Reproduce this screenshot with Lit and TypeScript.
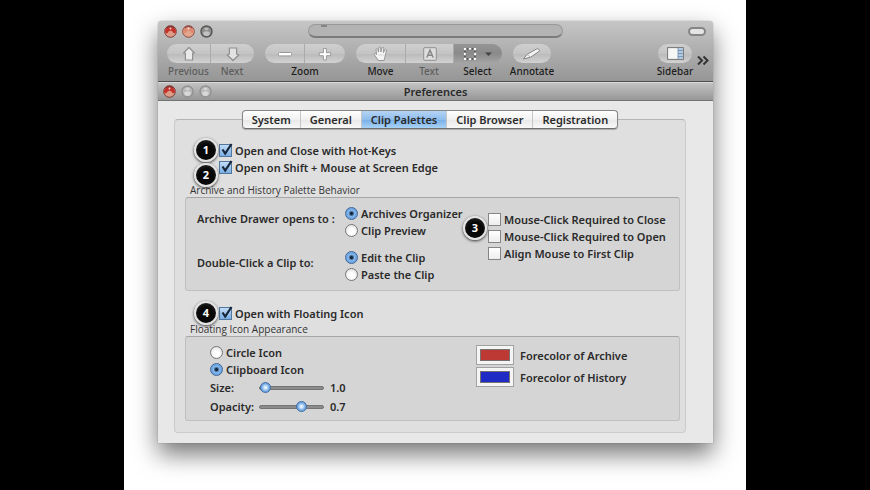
import { LitElement, html, css, svg, nothing, TemplateResult } from "lit";
import { customElement, property, state } from "lit/decorators.js";
import { classMap } from "lit/directives/class-map.js";

const controls = css`
  * { box-sizing: border-box; }
  button, input { margin: 0; padding: 0; border: 0; font: inherit; color: inherit; background: none; }
  svg { display: block; }
`;

@customElement("traffic-lights")
class TrafficLights extends LitElement {
  @property({ type: Boolean }) muted = false;

  static styles = [controls, css`
    :host { display: flex; gap: 5px; }
    button { width: 13px; height: 13px; }
  `];

  private red(name: string, rim: string, top: string, low: string) {
    return html`<button aria-label=${name}>
      <svg width="13" height="13" viewBox="0 0 13 13">
        <circle cx="6.5" cy="6.5" r="5.8" fill=${low} stroke=${rim}/>
        <path d="M1 7a5.500 5.800 0 0 1 11 0C10.800 9 9.600 8.600 8.800 6.800L6.500 5.400 4.200 6.800C3.400 8.600 2.200 9 1 7z" fill=${top}/>
        <path d="M2.600 3a5.400 5.400 0 0 1 7.800 0" fill="none" stroke=${rim} stroke-width="1.400"/>
        <circle cx="6.500" cy="3.600" r="1" fill="#fff" opacity=".75"/>
      </svg></button>`;
  }

  private grey(name: string, rim: string, low: string) {
    return html`<button aria-label=${name}>
      <svg width="13" height="13" viewBox="0 0 13 13">
        <circle cx="6.500" cy="6.500" r="5.500" fill=${low} stroke=${rim} stroke-width="1.400"/>
        ${svg`<ellipse cx="6.500" cy="4" rx="2" ry="1.300" fill="#fff" opacity=".4"/>
        <ellipse cx="6.500" cy="8.600" rx="3.200" ry="2.400" fill="#fff" opacity=".45"/>`}
      </svg></button>`;
  }

  render() {
    return html`
      ${this.red("Close", "#7c3a38", "#c5302b", "#dd9c85")}
      ${this.muted
        ? html`${this.grey("Minimize", "#929292", "#b8b8b8")}${this.grey("Zoom", "#929292", "#b8b8b8")}`
        : html`${this.red("Minimize", "#8f4a42", "#dd8a72", "#e3a58c")}${this.grey("Zoom", "#555", "#8e8e8c")}`}
    `;
  }
}

const icons: Record<string, TemplateResult> = {
  up: html`<svg width="14" height="16" viewBox="0 0 14 16"><path d="M7 1.500 12.500 7H10.600V14H3.400V7H1.500Z" fill="#e9e9e9" stroke="#8f8f8f" stroke-width="1.200" stroke-linejoin="round"/></svg>`,
  down: html`<svg width="14" height="16" viewBox="0 0 14 16"><path d="M7 14.500 12.800 9 10.600 8V2H3.400V8L1.200 9Z" fill="#e2e2e2" stroke="#8f8f8f" stroke-width="1.200" stroke-linejoin="round"/></svg>`,
  minus: html`<svg width="16" height="16" viewBox="0 0 16 16"><rect x="1.500" y="6.500" width="13" height="3.400" rx="1" fill="#fff" stroke="#999"/></svg>`,
  plus: html`<svg width="16" height="16" viewBox="0 0 16 16"><path d="M6.400 2.500h3v4.200h4.200v3H9.400v4.200h-3V9.700H2.200v-3h4.200z" fill="#fff" stroke="#999"/></svg>`,
  hand: html`<svg width="16" height="16" viewBox="0 0 16 16"><path d="M5.200 14.500C4 12 1.600 9.600 1.400 8.300c-.1-1 1.200-1.200 2.200.2L3 3.600c-.1-1.300 1.500-1.400 1.800-.1l.6 2.600L5.800 2c.1-1.200 1.800-1.200 1.900 0l.2 4L9 2.100c.3-1.200 1.900-.8 1.800.4l-.4 4.100 1.500-2.400c.7-1 2-.4 1.600.8l-1.200 4c-.4 1.900-.8 3.500-1.200 5.500z" fill="#f4f4f4" stroke="#8f8f8f" stroke-width=".9"/><path d="M6 8.500v1M8 8v1.500M10 8.500v1" stroke="#aaa" stroke-width=".7"/></svg>`,
  text: html`<svg width="14" height="14" viewBox="0 0 14 14"><rect x=".7" y=".7" width="12.600" height="12.600" rx="1" fill="#dedede" stroke="#8f8f8f"/><path d="M3.800 10.500 7 3.200l3.200 7.300M5 8.300h4" fill="none" stroke="#888" stroke-width="1.500"/></svg>`,
  select: html`<svg width="32" height="16" viewBox="0 0 32 16"><rect x="3" y="3" width="10" height="10" fill="none" stroke="#5c5c5c" stroke-width="2"/><path d="M1.500 1.500h3v3h-3zM6.500 1.500h3v2.600h-3zM11.500 1.500h3v3h-3zM1.500 6.500h2.600v3H1.500zM11.900 6.500h2.600v3h-2.600zM1.500 11.500h3v3h-3zM6.500 11.900h3v2.600h-3zM11.500 11.500h3v3h-3z" fill="#fff" stroke="#666" stroke-width=".5"/><path d="M23 6.500h7l-3.500 3.500z" fill="#444"/></svg>`,
  pen: html`<svg width="20" height="14" viewBox="0 0 20 14"><path d="M1.500 12 5 7.400 14.500 2c1.400-.7 3.600.8 2.800 2.300L8.500 10.200z" fill="#f3f3f3" stroke="#858585" stroke-linejoin="round"/><path d="M5 7.400 8.500 10.200" stroke="#aaa" stroke-width=".8"/></svg>`,
  sidebar: html`<svg width="17" height="13" viewBox="0 0 17 13"><rect x=".6" y=".6" width="15.800" height="11.800" fill="#f6f6f6" stroke="#757575"/><rect x="11" y="1" width="5" height="11" fill="#b4cae2"/><path d="M11 1v11M11 3.500h5M11 6.500h5M11 9.500h5" stroke="#6d8aac" stroke-width=".8"/></svg>`,
};

interface Tool { icon: string; name: string; width: number; dim?: boolean; pressed?: boolean; }
interface ToolGroup { tools: Tool[]; caption?: string; end?: boolean; }

const toolGroups: ToolGroup[] = [
  { tools: [{ icon: "up", name: "Previous", width: 43, dim: true }, { icon: "down", name: "Next", width: 44, dim: true }] },
  { caption: "Zoom", tools: [{ icon: "minus", name: "Zoom out", width: 39 }, { icon: "plus", name: "Zoom in", width: 41 }] },
  { tools: [{ icon: "hand", name: "Move", width: 49 }, { icon: "text", name: "Text", width: 48, dim: true }, { icon: "select", name: "Select", width: 49, pressed: true }] },
  { tools: [{ icon: "pen", name: "Annotate", width: 38 }] },
  { end: true, tools: [{ icon: "sidebar", name: "Sidebar", width: 34 }] },
];

@customElement("viewer-toolbar")
class ViewerToolbar extends LitElement {
  static styles = [controls, css`
    :host {
      display: block; height: 60px; border-radius: 4px 4px 0 0; border-bottom: 1px solid #505050;
      background: linear-gradient(#c6c6c6, #969696); font-size: 10px; line-height: 14px; font-weight: 500; color: #1c1c1c;
    }
    .title { display: grid; grid-template-columns: 1fr auto 1fr; align-items: center; height: 20px; padding: 0 7px 0 6px; }
    .bar { width: 255px; height: 14px; border-radius: 7px; border: 1px solid #989898; border-bottom: 2px solid #7b7b7b; background: #b3b3b3; }
    .notch { width: 6px; height: 2px; margin-left: 12px; background: #858585; }
    .lozenge { justify-self: end; width: 18px; height: 9px; border-radius: 5px; border: 2px solid #858585; background: #e4e4e4; }
    .tools { display: flex; padding: 3px 4px 0 9px; gap: 11px; }
    .end { margin-left: auto; margin-right: -6px; }
    .pills { display: flex; }
    .tool { height: 19px; display: grid; place-items: center; background: linear-gradient(#cfcfcf, #c4c4c4 50%, #bababa 52%, #d2d2d2); border-left: 1px solid #aaaaaa; }
    .tool:first-child { border-left: 0; border-radius: 10px 0 0 10px; }
    .tool:last-child { border-radius: 0 10px 10px 0; }
    .tool:only-child { border-radius: 10px; }
    .tool.pressed { background: linear-gradient(#959595, #8a8a8a 50%, #a4a4a4); }
    .captions { display: flex; margin-top: 1px; }
    .caption { display: flex; justify-content: center; white-space: nowrap; }
    .dim { color: #5d5d5d; }
    .whole { flex: 1; }
    .more { width: 12px; height: 12px; margin-top: 11px; }
  `];

  private group(g: ToolGroup) {
    return html`<div class=${classMap({ group: true, end: !!g.end })}>
      <div class="pills">${g.tools.map((t) => html`
        <button class=${classMap({ tool: true, pressed: !!t.pressed })} style="width:${t.width}px" aria-label=${t.name}>${icons[t.icon]}</button>`)}
      </div>
      <div class="captions">${g.caption
        ? html`<span class="caption whole">${g.caption}</span>`
        : g.tools.map((t) => html`<span class=${classMap({ caption: true, dim: !!t.dim })} style="width:${t.width}px">${t.name}</span>`)}
      </div>
    </div>`;
  }

  render() {
    return html`
      <div class="title">
        <traffic-lights></traffic-lights>
        <div class="bar"><div class="notch"></div></div>
        <button class="lozenge" aria-label="Toggle toolbar"></button>
      </div>
      <div class="tools">
        ${toolGroups.map((g) => this.group(g))}
        <button class="more" aria-label="More tools">
          <svg width="12" height="12" viewBox="0 0 12 12"><path d="M1 1.500 5 5.500 1 9.500M6.500 1.500l4 4-4 4" fill="none" stroke="#333" stroke-width="2"/></svg>
        </button>
      </div>`;
  }
}

@customElement("preferences-panel")
class PreferencesPanel extends LitElement {
  @state() private tab = "Clip Palettes";
  @state() private size = 10;
  @state() private opacity = 70;

  static styles = [controls, css`
    :host { display: block; font-size: 11px; line-height: 17px; font-weight: 600; color: #2a2a2a; }
    .title { display: grid; grid-template-columns: 1fr auto 1fr; align-items: center; height: 19px; padding: 0 5px; border-top: 1px solid #dadada; border-bottom: 1px solid #747474; background: linear-gradient(#c2c2c2, #979797); line-height: 16px; }
    .body { padding: 9px 27px 10px 16px; background: #e8e8e8; }
    .tabs { position: relative; display: flex; width: max-content; margin: 0 auto -10px; height: 19px; border: 1px solid #858585; border-bottom-color: #6e6e6e; border-radius: 4px; overflow: hidden; background: linear-gradient(#fff, #f1f1f1 50%, #e8e8e8 52%, #f8f8f8); box-shadow: 0 1px 1px #aaa; }
    .tab { padding: 0 9px; border-left: 1px solid #c6c6c6; line-height: 17px; }
    .tab:first-child { border-left: 0; }
    .current { background: linear-gradient(#b5d4f5, #8fbdec 50%, #79aee6 52%, #a9d3f8); }
    .page { padding: 22px 5px 11px 10px; border: 1px solid #cbcbcb; border-top-color: #b5b5b5; border-radius: 4px; background: #dfdfdf; }
    .choice { position: relative; display: flex; align-items: center; gap: 3px; height: 17px; white-space: nowrap; width: max-content; }
    .lead { margin-left: 34px; }
    .choice input { appearance: none; width: 13px; height: 13px; flex: none; }
    .choice input[type="checkbox"] { border: 1px solid #858585; background: linear-gradient(#fff, #ededed); }
    .choice input[type="checkbox"]:checked { border-color: #52779f; background: linear-gradient(#c3dcf5, #79aee5); }
    .choice input[type="radio"] { border-radius: 50%; border: 1px solid #787878; background: radial-gradient(circle at 50% 60%, #fff 30%, #d4d4d4); }
    .choice input[type="radio"]:checked { border-color: #3c6699; background: radial-gradient(circle, #12263f 0 1px, #82b5ea 3px, #6fa5e0 5px, #b4d5f5); }
    .tick { position: absolute; left: 1px; top: 0; pointer-events: none; }
    .tick path { display: none; }
    input:checked ~ .tick path { display: block; }
    .marker { position: absolute; left: -25px; top: -4px; width: 24px; height: 24px; border-radius: 50%; border: 2px solid #e4e4e4; background: radial-gradient(circle at 50% 60%, #080808 50%, #333); box-shadow: 0 1px 3px #333; color: #fff; font-size: 11px; font-weight: 700; line-height: 20px; text-align: center; }
    .below { top: 4px; }
    .between { top: -12px; }
    .caption { margin: 0 0 0 5px; font-family: "Open Sans", sans-serif; font-size: 10px; line-height: 14px; font-weight: 400; color: #333; }
    .first { margin-top: 7px; }
    .next { margin-top: 14px; }
    .box { display: grid; padding: 7px 10px; border: 1px solid #c0c0c0; border-top: 1px solid #a6a6a6; border-radius: 3px; background: #d5d5d5; }
    .behavior { grid-template-columns: 148px 143px 1fr; row-gap: 10px; padding-left: 11px; }
    .label { padding-top: 5px; }
    .side { padding-top: 6px; height: 34px; }
    .appearance { grid-template-columns: 266px 1fr; padding-left: 24px; padding-bottom: 4px; }
    .slide { display: grid; grid-template-columns: 49px 65px auto; align-items: center; height: 19px; justify-content: start; }
    .slide output { padding-left: 6px; }
    input[type="range"] { appearance: none; width: 65px; height: 11px; }
    input[type="range"]::-webkit-slider-runnable-track { height: 4px; border-radius: 2px; background: #8c8c8c; border: 1px solid #757575; }
    input[type="range"]::-webkit-slider-thumb { appearance: none; width: 11px; height: 11px; margin-top: -5px; border-radius: 50%; border: 1px solid #3d6ca5; background: radial-gradient(circle, #e0f0ff 1px, #6ba3e0 4px, #9cc7f2); }
    .wells { display: flex; flex-direction: column; gap: 2px; padding-top: 1px; }
    .well { display: flex; align-items: center; gap: 6px; height: 20px; width: max-content; }
    .well input { appearance: none; width: 38px; height: 20px; padding: 3px; border: 1px solid #a2a2a2; background: #f5f5f5; }
    .well input::-webkit-color-swatch-wrapper { padding: 0; }
    .well input::-webkit-color-swatch { border: 1px solid #77706c; border-radius: 0; }
  `];

  private check(text: string, checked: boolean, marker = "", lead = false, place = "") {
    return html`<label class=${classMap({ choice: true, lead })}>
      <input type="checkbox" .checked=${checked}>${text}
      <svg class="tick" width="14" height="15" viewBox="0 0 14 15"><path d="M2.500 7.500 5.200 11.500 11.500 2" fill="none" stroke="#162538" stroke-width="2.200"/></svg>
      ${marker ? html`<span class="marker ${place}">${marker}</span>` : nothing}
    </label>`;
  }

  private radio(name: string, text: string, checked = false) {
    return html`<label class="choice"><input type="radio" name=${name} .checked=${checked}>${text}</label>`;
  }

  render() {
    return html`
      <div class="title"><traffic-lights muted></traffic-lights><span>Preferences</span></div>
      <div class="body">
        <div class="tabs" role="tablist">
          ${["System", "General", "Clip Palettes", "Clip Browser", "Registration"].map((t) => html`
            <button role="tab" aria-selected=${t === this.tab} class=${classMap({ tab: true, current: t === this.tab })} @click=${() => (this.tab = t)}>${t}</button>`)}
        </div>
        <div class="page">
          ${this.check("Open and Close with Hot-Keys", true, "1", true)}
          ${this.check("Open on Shift + Mouse at Screen Edge", true, "2", true, "below")}

          <p class="caption first" id="behavior">Archive and History Palette Behavior</p>
          <div class="box behavior" role="group" aria-labelledby="behavior">
            <div class="label" id="drawer">Archive Drawer opens to :</div>
            <div role="radiogroup" aria-labelledby="drawer">
              ${this.radio("drawer", "Archives Organizer", true)}${this.radio("drawer", "Clip Preview")}
            </div>
            <div class="side">
              ${this.check("Mouse-Click Required to Close", false)}
              ${this.check("Mouse-Click Required to Open", false, "3", false, "between")}
              ${this.check("Align Mouse to First Clip", false)}
            </div>
            <div class="label" id="double">Double-Click a Clip to:</div>
            <div role="radiogroup" aria-labelledby="double">
              ${this.radio("double", "Edit the Clip", true)}${this.radio("double", "Paste the Clip")}
            </div>
          </div>

          <div class="next">${this.check("Open with Floating Icon", true, "4", true)}</div>
          <p class="caption" id="appearance">Floating Icon Appearance</p>
          <div class="box appearance" role="group" aria-labelledby="appearance">
            <div>
              ${this.radio("icon", "Circle Icon")}${this.radio("icon", "Clipboard Icon", true)}
              <div class="slide">
                <label for="size">Size:</label>
                <input id="size" type="range" min="10" max="100" .value=${String(this.size)} @input=${(e: Event) => (this.size = +(e.target as HTMLInputElement).value)}>
                <output for="size">${(this.size / 10).toFixed(1)}</output>
              </div>
              <div class="slide">
                <label for="opacity">Opacity:</label>
                <input id="opacity" type="range" min="0" max="100" .value=${String(this.opacity)} @input=${(e: Event) => (this.opacity = +(e.target as HTMLInputElement).value)}>
                <output for="opacity">${(this.opacity / 100).toFixed(1)}</output>
              </div>
            </div>
            <div class="wells">
              <label class="well"><input type="color" value="#bd3a34">Forecolor of Archive</label>
              <label class="well"><input type="color" value="#1f2bc4">Forecolor of History</label>
            </div>
          </div>
        </div>
      </div>`;
  }
}

@customElement("app-root")
class AppRoot extends LitElement {
  static styles = css`
    :host { display: block; box-sizing: border-box; min-height: 100vh; padding: 0 124px; background: #000; font-family: "Noto Sans", "Open Sans", sans-serif; }
    .stage { box-sizing: border-box; min-height: 100vh; padding: 21px 33px 40px 34px; overflow: hidden; background: #fff; }
    .window { border-radius: 4px 4px 0 0; box-shadow: 0 0 1px #555, 0 11px 24px rgba(0, 0, 0, 0.55); }
  `;

  render() {
    return html`<main class="stage"><div class="window"><viewer-toolbar></viewer-toolbar><preferences-panel></preferences-panel></div></main>`;
  }
}
